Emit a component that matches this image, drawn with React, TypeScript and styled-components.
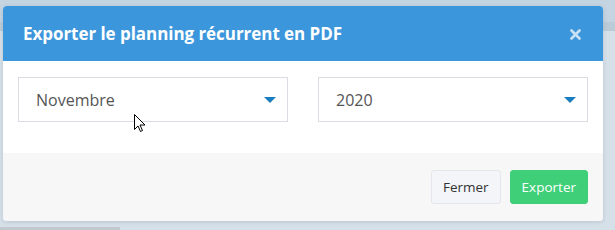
import * as React from 'react'
import styled, { createGlobalStyle } from 'styled-components'

const GlobalStyle = createGlobalStyle`
  html, body {
    margin: 0;
    padding: 0;
    background: #d6e0e9;
    font-family: 'Open Sans', 'Noto Sans', sans-serif;
  }
`

const Page = styled.div`
  position: relative;
  width: 615px;
  height: 230px;
  overflow: hidden;
  background: linear-gradient(
    to bottom,
    #c4d4e1 0,
    #c4d4e1 22px,
    #bccbd8 22px,
    #bccbd8 31px,
    #d6e0e9 31px
  );
  padding: 6px 12px 0 3px;
  box-sizing: border-box;
`

const BottomBar = styled.div`
  position: absolute;
  left: 0;
  bottom: 0;
  width: 120px;
  height: 3px;
  background: #c3c8ce;
`

const Modal = styled.div`
  width: 600px;
  border-radius: 4px;
  overflow: hidden;
  background: #fff;
  box-shadow: 0 1px 4px rgba(60, 80, 100, 0.18);
`

const Header = styled.div`
  height: 55px;
  display: flex;
  align-items: center;
  justify-content: space-between;
  padding: 0 22px 0 20px;
  background: #3c96db;
`

const Title = styled.h4`
  margin: 0;
  color: #fff;
  font-size: 17px;
  font-weight: 700;
  letter-spacing: -0.05px;
`

const CloseIcon = styled.svg`
  display: block;
  margin-top: 1px;
`

const Body = styled.div`
  display: grid;
  grid-template-columns: 1fr 1fr;
  gap: 30px;
  padding: 16px 15px 31px;
`

const SelectBox = styled.div`
  height: 45px;
  box-sizing: border-box;
  border: 1px solid #d9dce2;
  display: flex;
  align-items: center;
  justify-content: space-between;
  padding: 0 11px 0 17px;
  color: #555;
  font-size: 16px;
`

const Caret = styled.span`
  width: 0;
  height: 0;
  border-left: 6.5px solid transparent;
  border-right: 6.5px solid transparent;
  border-top: 6px solid #1a7dc0;
`

const Footer = styled.div`
  display: flex;
  justify-content: flex-end;
  gap: 9px;
  padding: 17px 15px 17px;
  background: #f7f7f7;
`

const Button = styled.button<{ primary?: boolean }>`
  height: 34px;
  padding: 0 11px;
  border-radius: 3px;
  font-family: inherit;
  font-size: 13.5px;
  border: 1px solid ${({ primary }) => (primary ? '#3ecf78' : '#e3e6ec')};
  background: ${({ primary }) => (primary ? '#3ecf78' : '#f4f5f9')};
  color: ${({ primary }) => (primary ? '#fff' : '#333')};
`

const Pointer = styled.svg`
  position: absolute;
  left: 134px;
  top: 114px;
`

const selects = ['Novembre', '2020']

export default function App() {
  return (
    <>
      <GlobalStyle />
      <Page>
        <Modal>
          <Header>
            <Title>Exporter le planning récurrent en PDF</Title>
            <CloseIcon width="11" height="11" viewBox="0 0 11 11" aria-label="Fermer">
              <path
                d="M1.5 1.5 L9.5 9.5 M9.5 1.5 L1.5 9.5"
                stroke="rgba(255,255,255,0.72)"
                strokeWidth="2.6"
                strokeLinecap="round"
              />
            </CloseIcon>
          </Header>
          <Body>
            {selects.map((s) => (
              <SelectBox key={s}>
                {s}
                <Caret />
              </SelectBox>
            ))}
          </Body>
          <Footer>
            <Button>Fermer</Button>
            <Button primary>Exporter</Button>
          </Footer>
        </Modal>
        <BottomBar />
        <Pointer width="13" height="19" viewBox="0 0 13 19">
          <path
            d="M0.5 0.5 L0.5 15.5 L4 12 L6.5 17.5 L8.5 16.5 L6 11 L11 11 Z"
            fill="#fff"
            stroke="#000"
            strokeWidth="1"
            strokeLinejoin="miter"
          />
        </Pointer>
      </Page>
    </>
  )
}
